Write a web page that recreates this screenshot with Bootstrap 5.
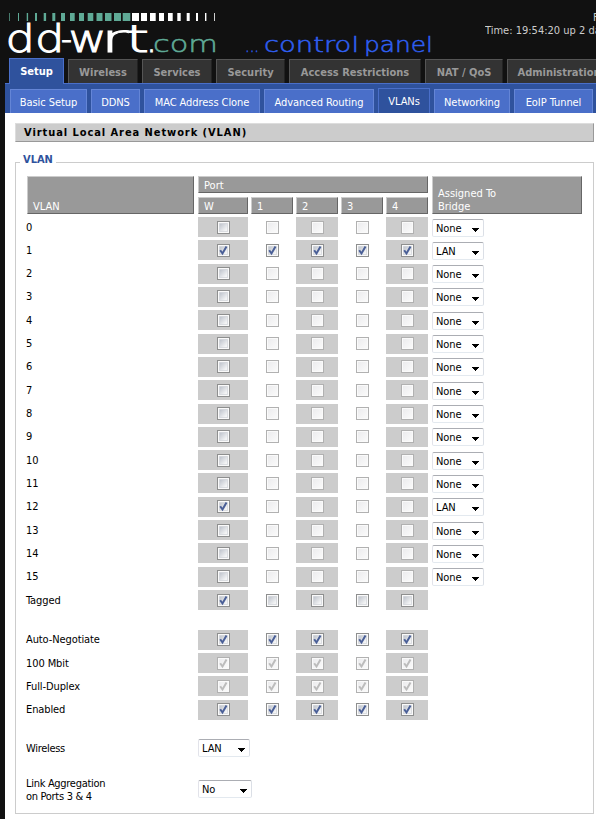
<!DOCTYPE html>
<html lang="en">
<head>
<meta charset="utf-8">
<title>DD-WRT - VLANs</title>
<link href="https://cdn.jsdelivr.net/npm/bootstrap@5.3.0/dist/css/bootstrap.min.css" rel="stylesheet">
<style>
body{background:#111;font:11px/13px "DejaVu Sans Condensed","DejaVu Sans",sans-serif;color:#000;height:819px;overflow:hidden;padding-left:5px}
.masthead{height:58px;margin-left:-5px}
.logo{width:440px;height:58px;flex:none;overflow:visible}
.logo text{font-family:"DejaVu Sans",sans-serif;font-weight:200}
.status{width:111px;color:#ccc;padding-top:11px;white-space:nowrap;overflow:hidden}
.status .fw{padding-left:108px}
.tabs{height:25px;padding-left:4px;gap:4px}
.tabs a{flex:none;height:24px;background:#333;border:1px solid #555;border-bottom:0;border-right-color:#222;color:#999;font-weight:700;line-height:25px;text-align:center;text-decoration:none;white-space:nowrap}
.tabs a.active{height:26px;margin-bottom:-1px;background:#2f529d;border-color:#4a6fc9;color:#fff;z-index:1}
.subtabs{height:30px;background:#2f529d;border-top:1px solid #4a6fc9;padding-left:5px;gap:4px}
.subtabs a{flex:none;height:24px;background:#4a6fc9;border:1px solid #6485d6;border-bottom:0;color:#fff;line-height:25px;text-align:center;text-decoration:none;white-space:nowrap;letter-spacing:-.07px}
.subtabs a.active{height:25px;background:#2f529d;border-color:#4a6fc9}
.content{background:#fff;height:706px;padding:10px 2px 0 10px}
.title{height:19px;margin:0;background:#ccc;border:1px solid #ddd;border-right-color:#999;border-bottom-color:#999;padding-left:8px;font-size:11px;font-weight:700;line-height:18px;letter-spacing:.93px}
.panel{border:1px solid #ccc;height:652px;margin-top:20px;padding:13px 11px 0}
.legend{width:max-content;height:13px;margin:-23px 0 10px -7px;padding:0 3px;background:#fff;color:#2f529d;font-weight:700}
.heads,.line{display:grid;grid-template-columns:168px 50px 42px 42px 42px 42px 151px;column-gap:3px}
.heads{grid-template-rows:17px 17px;row-gap:4px;height:38px;margin-bottom:3px}
.heads div{background:#999;color:#fff;border:1px solid #ccc;border-right-color:#666;border-bottom-color:#666;padding-left:5px;line-height:17px}
.heads .h-vlan{grid-row:1/3;margin-right:1px;padding-top:21px}
.heads .h-port{grid-column:2/7}
.heads .h-bridge{grid-row:1/3;grid-column:7;margin-left:1px;padding-top:10px;line-height:13px}
.line{height:23px;--drop:3px}
.line.long{height:24px}
.line.low{--drop:4px}
.name{padding-top:var(--drop);margin-left:-1px;white-space:nowrap;letter-spacing:-.1px}
.port{height:20px;padding-top:var(--drop);padding-left:15px}
.port.wide{padding-left:19px}
.port.shade{background:#ccc}
.tick{display:block;width:13px;height:13px}
.pick{width:52px;height:18px;margin-top:calc(var(--drop) - 2px);border:1px solid #e3e9ef;border-top-color:#abadb3;border-left-color:#e2e3ea;border-right-color:#dbdfe6;border-radius:2px;background:#fff;padding:0 4px 0 3px;line-height:17px;letter-spacing:-.1px}
.line .pick{margin-left:1px}
.pick svg{width:7px;height:4px;margin-top:4px}
.lower .cap{width:172px;margin-left:-1px;letter-spacing:-.3px}
.lower .solo{padding-top:3px}
.lower.aggr{margin-top:19px}
.aggr .cap{padding-top:1px}
.aggr .pick{width:54px;margin-top:4px}
</style>
<script src="https://cdn.jsdelivr.net/npm/bootstrap@5.3.0/dist/js/bootstrap.bundle.min.js"></script>
</head>
<body>
<header class="masthead d-flex">
<svg class="logo" viewBox="0 0 440 58" role="img">
<g id="bars"></g>
<g fill="#fff" stroke="#fff" stroke-width="1" font-size="36.5">
<text x="5.500" y="51.500" textLength="59" lengthAdjust="spacingAndGlyphs">dd</text>
<text x="61" y="51.500" textLength="11" lengthAdjust="spacingAndGlyphs">-</text>
<text x="68.500" y="51.500" textLength="38" lengthAdjust="spacingAndGlyphs">w</text>
<text x="101" y="51.500" textLength="27" lengthAdjust="spacingAndGlyphs">r</text>
<text x="126" y="51.500" textLength="23" lengthAdjust="spacingAndGlyphs">t</text>
<text x="146" y="51.500" textLength="11" lengthAdjust="spacingAndGlyphs">.</text>
</g>
<text x="153" y="52" font-size="23.500" fill="#5faa96" stroke="#5faa96" stroke-width=".5" textLength="65" lengthAdjust="spacingAndGlyphs">com</text>
<g fill="#2f5ff0" stroke="#2f5ff0" stroke-width=".5" font-size="20.500">
<text x="245" y="52" textLength="14" lengthAdjust="spacingAndGlyphs">...</text>
<text x="264" y="52" textLength="95" lengthAdjust="spacingAndGlyphs">control</text>
<text x="364" y="52" textLength="69" lengthAdjust="spacingAndGlyphs">panel</text>
</g>
</svg>
<div class="status ms-auto"><div class="fw">Firmware</div><div>Time: 19:54:20 up 2 days</div></div>
</header>
<nav class="tabs d-flex align-items-end" id="tabs"></nav>
<nav class="subtabs d-flex align-items-end" id="subtabs"></nav>
<main class="content">
<h2 class="title">Virtual Local Area Network (VLAN)</h2>
<section class="panel">
<div class="legend">VLAN</div>
<div class="heads">
<div class="h-vlan">VLAN</div><div class="h-port">Port</div>
<div>W</div><div>1</div><div>2</div><div>3</div><div>4</div>
<div class="h-bridge">Assigned To<br>Bridge</div>
</div>
<div id="lines"></div>
<div class="lower d-flex"><div class="cap solo">Wireless</div><div class="pick mt-0 d-flex justify-content-between align-items-center"><span>LAN</span><svg viewBox="0 0 7 4"><path d="M0 0h7v1H6v1H5v1H4v1H3V3H2V2H1V1H0z"/></svg></div></div>
<div class="lower aggr d-flex"><div class="cap">Link Aggregation<br>on Ports 3 &amp; 4</div><div class="pick d-flex justify-content-between align-items-center"><span>No</span><svg viewBox="0 0 7 4"><path d="M0 0h7v1H6v1H5v1H4v1H3V3H2V2H1V1H0z"/></svg></div></div>
</section>
</main>
<svg width="0" height="0" class="d-block"><defs>
<linearGradient id="g1" x1="0" y1="0" x2="1" y2="1"><stop offset="0" stop-color="#bcc1ca"/><stop offset=".8" stop-color="#f3f4f5"/></linearGradient>
<linearGradient id="g2" x1="0" y1="0" x2="1" y2="1"><stop offset="0" stop-color="#ececee"/><stop offset="1" stop-color="#fafafa"/></linearGradient>
</defs></svg>
<script>
const bars=[[9,.7],[18,1],[26.7,1.4],[35,2],[43.7,2.4],[52.3,3],[61,4],[70,4.7],[79,5],[87.7,5.6],[96.5,6],[105,6.5],[114,7],[122.7,7.6],[132,7],[141,6],[150,5.7],[159,5],[168,4.7],[177.3,3.4],[186.7,3],[196,2],[205,1.4],[214,.8]];
document.getElementById('bars').innerHTML=bars.map((b,i)=>`<rect x="${b[0]}" y="13" width="${b[1]}" height="8" fill="${i<14?'#5faa96':'#fff'}"/>`).join('');
const tabs=[['Setup',55],['Wireless',70],['Services',70],['Security',69],['Access Restrictions',132],['NAT / QoS',78],['Administration',104]];
document.getElementById('tabs').innerHTML=tabs.map((t,i)=>`<a href="#" class="${i?'':'active'}" style="width:${t[1]}px">${t[0]}</a>`).join('');
const subs=[['Basic Setup',77],['DDNS',49],['MAC Address Clone',116],['Advanced Routing',110],['VLANs',52],['Networking',76],['EoIP Tunnel',79]];
document.getElementById('subtabs').innerHTML=subs.map((t,i)=>`<a href="#" class="${i==4?'active':''}" style="width:${t[1]}px">${t[0]}</a>`).join('');
// tick states: 0 empty, 1 checked, d empty disabled, c checked disabled
const tick=s=>{const off=s=='d'||s=='c',on=s=='1'||s=='c';
return `<svg class="tick" viewBox="0 0 13 13"><rect x=".5" y=".5" width="12" height="12" fill="#fafafa" stroke="${off?'#b1b1b1':'#8e8f8f'}"/>`+
(off?'<rect x="2" y="2" width="9" height="9" fill="url(#g2)"/>':'<rect x="2.5" y="2.5" width="8" height="8" fill="url(#g1)" stroke="#c9cdd3" stroke-opacity=".6"/>')+
(on?`<path d="M3.2 6.2l2.3 3.3L9.500 2.600" fill="none" stroke="${off?'#bcbcbc':'#4a5f97'}" stroke-width="2"/>`:'')+'</svg>'};
const arrow='<svg viewBox="0 0 7 4"><path d="M0 0h7v1H6v1H5v1H4v1H3V3H2V2H1V1H0z"/></svg>';
const rows=[];
for(let i=0;i<16;i++)rows.push([i,i==1?'11111':i==12?'1dddd':'0dddd',i==1||i==12?'LAN':'None']);
rows.push(['Tagged','10000'],['Auto-Negotiate','11111'],['100 Mbit','ccccc'],['Full-Duplex','ccccc'],['Enabled','11111']);
const tops=[217,240,264,287,310,334,357,380,404,427,450,473,497,520,543,567,590,630,653,676,700,739];
const low=[1,1,0,0,1,0,0,1,0,0,1,1,0,1,1,0,1,0,1,1,0];
document.getElementById('lines').innerHTML=rows.map((r,i)=>{const h=tops[i+1]-tops[i];
return `<div class="line${h==24?' long':''}${low[i]?' low':''}" ${h>24?`style="height:${h}px"`:''}><div class="name">${r[0]}</div>`+
[...r[1]].map((s,j)=>`<div class="port${j?'':' wide'}${j%2?'':' shade'}">${tick(s)}</div>`).join('')+
(r[2]?`<div class="pick d-flex justify-content-between align-items-center"><span>${r[2]}</span>${arrow}</div>`:'')+'</div>'}).join('');
</script>
</body>
</html>
